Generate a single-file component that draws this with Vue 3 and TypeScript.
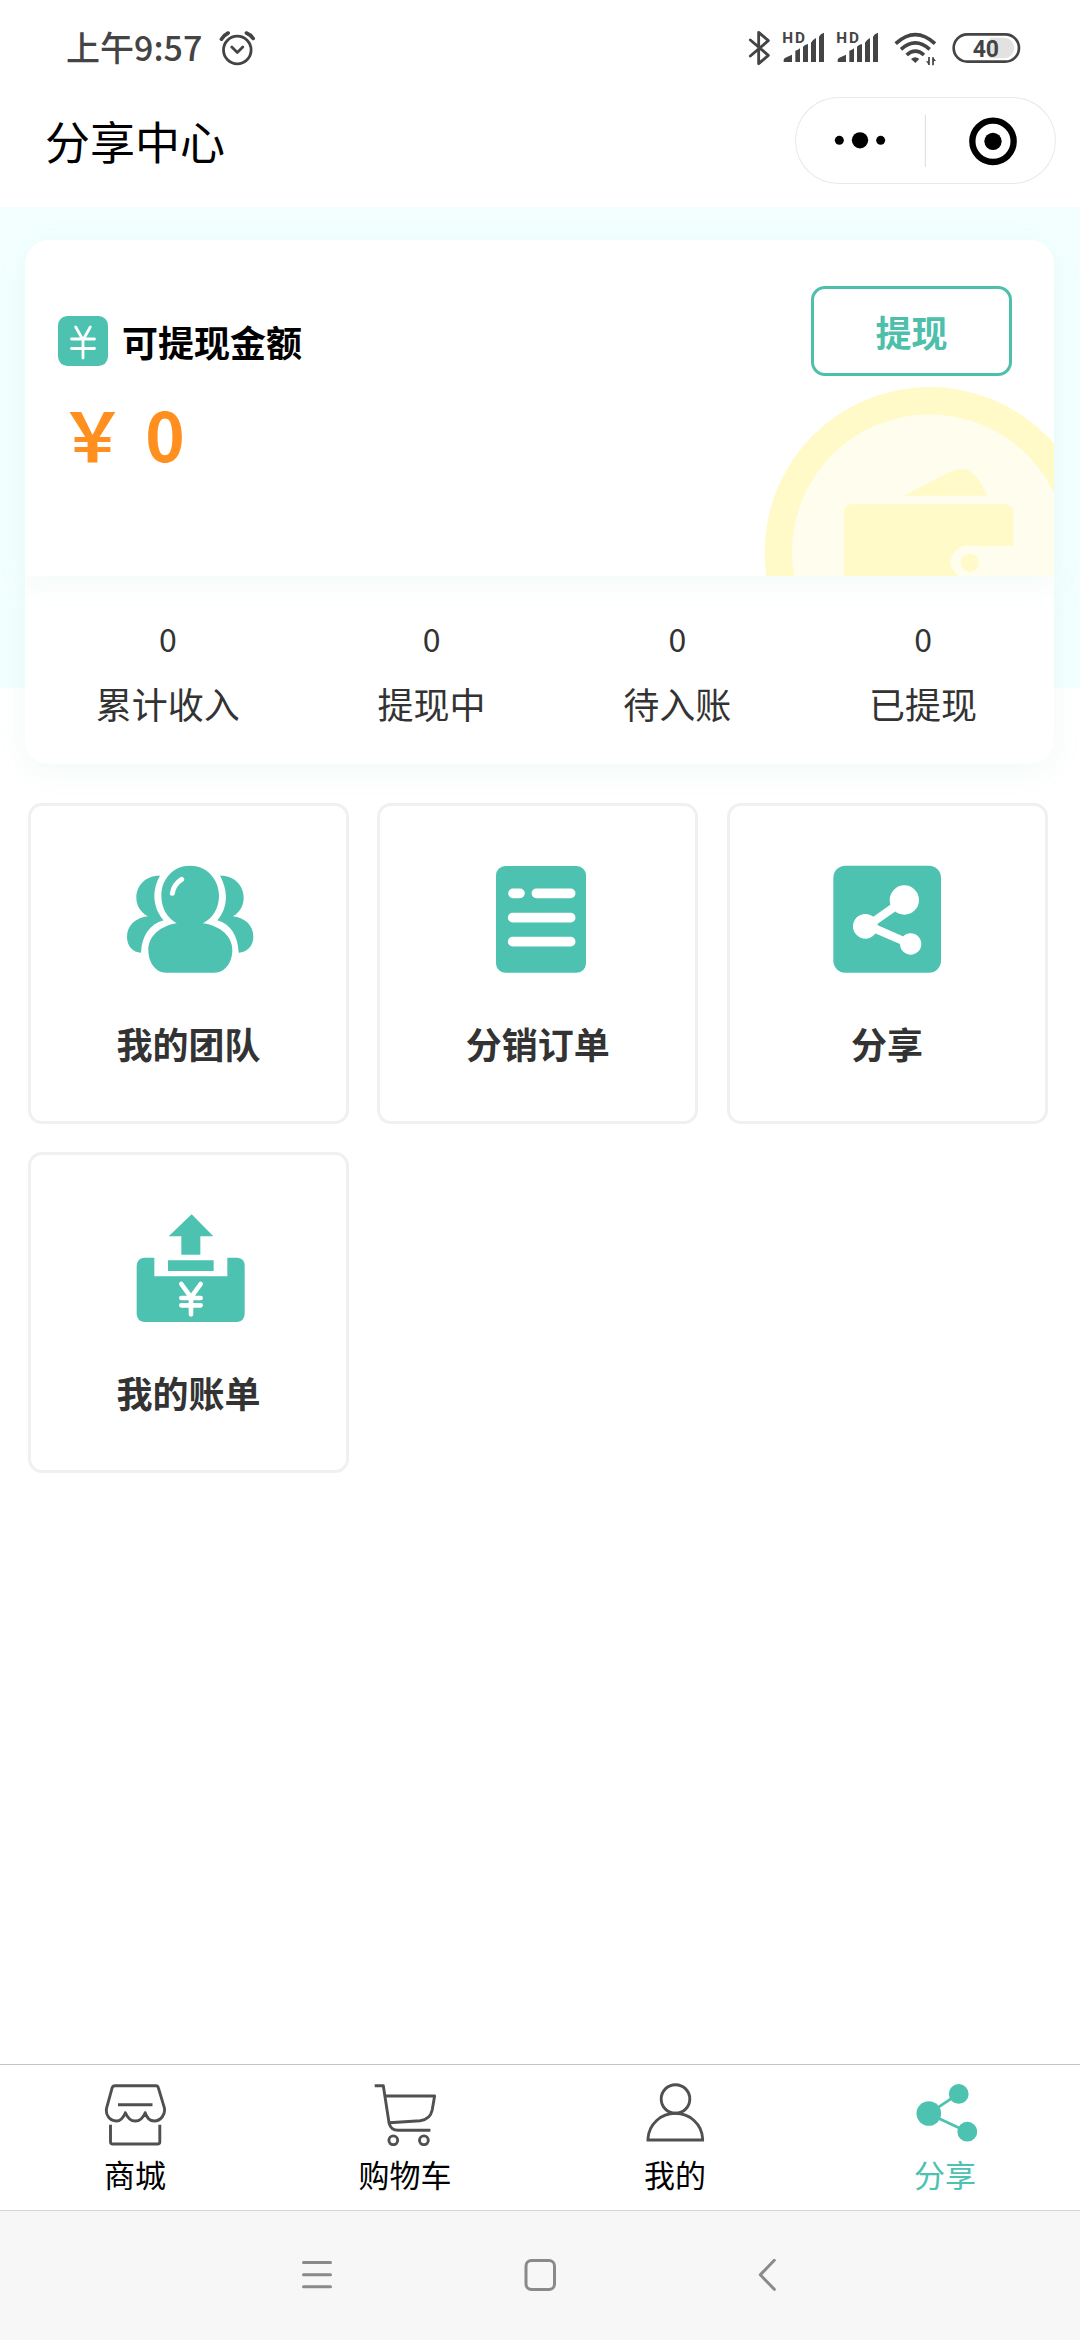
<script setup lang="ts">
interface Stat {
  label: string
  value: number
}
interface Feature {
  key: 'team' | 'orders' | 'share' | 'bill'
  label: string
  viewBox: string
}
interface Tab {
  key: 'mall' | 'cart' | 'mine' | 'share'
  label: string
  active?: boolean
}

const stats: Stat[] = [
  { label: '累计收入', value: 0 },
  { label: '提现中', value: 0 },
  { label: '待入账', value: 0 },
  { label: '已提现', value: 0 },
]

const features: Feature[] = [
  { key: 'team', label: '我的团队', viewBox: '296 226 420 324' },
  { key: 'orders', label: '分销订单', viewBox: '294 226 420 324' },
  { key: 'share', label: '分享', viewBox: '322 226 420 324' },
  { key: 'bill', label: '我的账单', viewBox: '296 224 420 324' },
]

const tabs: Tab[] = [
  { key: 'mall', label: '商城' },
  { key: 'cart', label: '购物车' },
  { key: 'mine', label: '我的' },
  { key: 'share', label: '分享', active: true },
]
</script>

<template>
  <div class="screen">
    <header class="status">
      <div class="status-left">
        <span class="time">上午9:57</span>
        <svg class="alarm" width="37" height="37" viewBox="219 30 37 37" fill="none" stroke="#444" stroke-linecap="round">
          <circle cx="237.3" cy="50" r="13.8" stroke-width="2.8" />
          <path d="M231.8 47l5.5 5.4 5.5-5.4" stroke-width="2.8" stroke-linejoin="round" />
          <path d="M221.4 39.2q2.6-4.2 6.8-6.2M246.4 33q4.2 1.6 6.8 5.4" stroke-width="3.6" />
        </svg>
      </div>
      <div class="status-right">
        <svg class="bluetooth" width="23" height="36" viewBox="85 90 69 108" fill="none" stroke="#444" stroke-width="8.500" stroke-linejoin="round" stroke-linecap="round">
          <path d="M92 120l54 46-29 25V97l29 25-54 46" />
        </svg>
        <svg v-for="n in 2" :key="n" class="signal" width="43" height="36" viewBox="186 90 129 108" fill="#444">
          <text x="187" y="129" font-family="Roboto, sans-serif" font-weight="700" font-size="46" textLength="68">HD</text>
          <path d="M191 186v-6q0-4 5-7l20-9v22zM226 186v-34q8-1 14-7v41zM249 186v-46q5-6 15-8v54zM273 186v-58q5-9 15-14v72zM297 186v-76q4-9 15-12v88z" />
        </svg>
        <svg class="wifi" width="43" height="36" viewBox="522 90 129 108" fill="none" stroke="#444" stroke-width="11">
          <path d="M527 131q59-54 118 0M543 148q43-39 86 0M560 165q26-23 52 0" />
          <path d="M573 177q13-10 25 0l-12 12z" fill="#444" stroke="none" />
          <path d="M627 171v24l-9-11h7M639 196v-24l9 11h-7" fill="#444" stroke="none" />
          <path d="M627 171v24M639 172v24" stroke-width="5" />
        </svg>
        <svg class="battery" width="69" height="36" viewBox="695 90 207 108">
          <path d="M808 113h43a31 31 0 0 1 0 62h-43z" fill="#e2e2e2" />
          <rect x="700" y="103" width="196" height="82" rx="41" fill="none" stroke="#444" stroke-width="8" />
          <text x="757" y="170" font-family="Roboto, sans-serif" font-weight="700" font-size="72" textLength="79" lengthAdjust="spacingAndGlyphs" fill="#444">40</text>
        </svg>
      </div>
    </header>

    <div class="titlebar">
      <h1>分享中心</h1>
      <div class="capsule">
        <svg width="261" height="86" viewBox="225 293 783 258">
          <circle cx="358" cy="423" r="13.5" />
          <circle cx="420" cy="423" r="24.5" />
          <circle cx="482" cy="423" r="13.5" />
          <path d="M616 346v157" stroke="#ddd" stroke-width="3" />
          <circle cx="819" cy="426" r="62" fill="none" stroke="#000" stroke-width="19" />
          <circle cx="819" cy="426" r="26" />
        </svg>
      </div>
    </div>

    <main class="content">
      <section class="balance">
        <svg class="coin" width="290" height="190" viewBox="130 468 870 570">
          <circle cx="627" cy="966" r="495" fill="#fffac8" />
          <circle cx="627" cy="966" r="413" fill="#fffded" />
          <g fill="#fffac8">
            <path d="M550 797l138-72q50-22 82 19 14 20 29 53z" />
            <path d="M370 1040V848q0-25 25-25h456q27 0 27 25v100H750a49 49 0 0 0-32 92z" />
            <circle cx="748" cy="998" r="27" />
          </g>
        </svg>
        <div class="balance-info">
          <div class="balance-title">
            <svg width="50" height="50" viewBox="0 0 50 50">
              <rect width="50" height="50" rx="9.5" fill="#4dc2b0" />
              <path d="M17.7 11l7.3 13 7.3-13M13.5 23h23M13.5 32.5h23M25 24v18" fill="none" stroke="#fff" stroke-width="2.8" stroke-linecap="round" stroke-linejoin="round" />
            </svg>
            <span>可提现金额</span>
          </div>
          <div class="amount">￥ 0</div>
        </div>
        <button class="withdraw" type="button">提现</button>
      </section>

      <section class="stats">
        <div v-for="s in stats" :key="s.label" class="stat">
          <span class="stat-value">{{ s.value }}</span>
          <span class="stat-label">{{ s.label }}</span>
        </div>
      </section>

      <section class="features">
        <div v-for="f in features" :key="f.key" class="feature">
          <svg width="140" height="108" :viewBox="f.viewBox" fill="#4dc2b0">
            <template v-if="f.key === 'team'">
              <path d="M419 258c-41-2-71 28-71 66 0 24 14 45 35 56-38 4-63 28-63 62 0 28 18 46 42 47 2-50 26-86 68-97-34-40-36-90-11-134z" />
              <path d="M599 258c41-2 71 28 71 66 0 24-12 45-33 56 38 4 62 28 62 62 0 28-20 46-44 47-2-50-24-86-64-97 34-40 32-90 8-134z" />
              <path d="M509 228c50 0 87 40 87 90 0 38-18 66-48 83 54 8 88 40 88 80 0 38-22 68-54 68H438c-32 0-54-30-54-68 0-40 34-72 85-80-28-17-46-45-46-83 0-50 36-90 86-90z" />
              <path d="M456 311q4-27 28-42" fill="none" stroke="#fff" stroke-width="15" stroke-linecap="round" />
            </template>
            <template v-else-if="f.key === 'orders'">
              <rect x="378" y="229" width="270" height="320" rx="28" />
              <path d="M429 311h21M499 311h103M428 384h174M428 456h174" stroke="#fff" stroke-width="29" stroke-linecap="round" />
            </template>
            <template v-else-if="f.key === 'share'">
              <rect x="371" y="228" width="323" height="321" rx="36" />
              <path d="M584 331l-97 68q-10 9 2 15l113 49" fill="none" stroke="#fff" stroke-width="25" />
              <g fill="#fff">
                <circle cx="584" cy="331" r="44" />
                <circle cx="467" cy="410" r="37" />
                <circle cx="603" cy="463" r="32" />
              </g>
            </template>
            <template v-else>
              <path d="M514 225l65 66h-39v55h-57v-55h-38zM443 363h137v32H443z" />
              <path d="M371 355h31v56h219v-56h30q22 2 22 24v146q-2 21-22 23H371q-20-2-22-23V379q2-22 22-24z" />
              <path d="M483 434l29 40 29-40M483 476h58M483 498h58M512 474v51" fill="none" stroke="#fff" stroke-width="14" stroke-linecap="round" stroke-linejoin="round" />
            </template>
          </svg>
          <span>{{ f.label }}</span>
        </div>
      </section>
    </main>

    <nav class="tabs">
      <div v-for="t in tabs" :key="t.key" class="tab" :class="{ active: t.active }">
        <svg width="64" height="64" viewBox="0 0 64 64" fill="none" stroke="#505050" stroke-width="2.9" stroke-linejoin="round">
          <template v-if="t.key === 'mall'">
            <path d="M12 3.7h41q1.8 0 2.3 2l6 20c1.6 7-4 13.3-10 13.3q-6.5 0-9.1-8.3-3.4 8.3-9.9 8.3t-9.9-8.3q-3.4 8.3-9 8.3c-6.8 0-11.4-6.3-9.7-13.3l5.5-20q.6-2 2.8-2zM15 22.7h34.5" />
            <path d="M7.5 42.7v17q0 2.3 2.3 2.3h44.7q2.3 0 2.3-2.3v-17" />
          </template>
          <template v-else-if="t.key === 'cart'">
            <path d="M1.7 3.7h8.600l5.800 37.600q2 7 9 7h32.300M12.700 14h48.900l-2.400 14q-2 9.500-12 10.700l-30.800 2" />
            <circle cx="20.3" cy="58.3" r="4.4" />
            <circle cx="50.9" cy="58.3" r="4.4" />
          </template>
          <template v-else-if="t.key === 'mine'">
            <circle cx="32.5" cy="17" r="14.3" />
            <path d="M5 58v-1.5C6 42 18 31.3 32.3 31.3S58.8 42 59.6 56.5V58z" stroke-linejoin="miter" />
          </template>
          <template v-else>
            <path d="M45.7 11.7L15.8 31.7l38.5 18" stroke="#4dc2b0" stroke-width="2.8" />
            <g fill="#4dc2b0" stroke="none">
              <circle cx="15.8" cy="31.5" r="12.3" />
              <circle cx="45.7" cy="11.9" r="9.9" />
              <circle cx="54.3" cy="49.7" r="9.9" />
            </g>
          </template>
        </svg>
        <span>{{ t.label }}</span>
      </div>
    </nav>

    <footer class="sysnav">
      <svg width="474" height="34" viewBox="302 2258 474 34" fill="none" stroke="#8a8a8a" stroke-width="3" stroke-linecap="round" stroke-linejoin="round">
        <path d="M303.5 2262.4h27M303.5 2274.7h27M303.5 2286.7h27" />
        <rect x="526" y="2260.5" width="28.5" height="29" rx="5.5" />
        <path d="M774.3 2260.3l-14 14.5 14 14.5" />
      </svg>
    </footer>
  </div>
</template>

<style>
body {
  background: #fff;
}
</style>

<style scoped>
.screen {
  display: flex;
  flex-direction: column;
  width: 1080px;
  height: 2340px;
  overflow: hidden;
  background: #fff;
  color: #000;
  font-family: "Noto Sans CJK SC", sans-serif;
}
.screen * {
  box-sizing: border-box;
}
svg {
  display: block;
  flex: none;
}
.status {
  display: flex;
  justify-content: space-between;
  height: 97px;
  padding: 30px 59px 0 66px;
}
.status-left,
.status-right {
  display: flex;
  align-items: flex-start;
}
.time {
  width: 153px;
  color: #444;
  font-size: 34px;
  font-weight: 500;
  line-height: 34px;
}
.signal {
  margin-left: 11px;
  overflow: visible;
}
.wifi,
.battery {
  margin-left: 15px;
}
.titlebar {
  display: flex;
  justify-content: space-between;
  align-items: center;
  height: 110px;
  padding: 0 24px 23px 45px;
}
h1 {
  margin: 0;
  font-size: 45px;
  font-weight: 400;
  line-height: 60px;
}
.capsule {
  height: 87px;
  border-radius: 44px;
  box-shadow: inset 0 0 0 1px #e9e9e9;
}
.content {
  flex: 1;
  padding: 33px 26px 0 25px;
  background: linear-gradient(#f3ffff, #f3ffff) 0 0 / 100% 481px no-repeat;
}
.balance {
  position: relative;
  display: flex;
  justify-content: space-between;
  align-items: flex-start;
  height: 336px;
  padding: 46px 42px 0 33px;
  border-radius: 24px 24px 0 0;
  background: #fff;
  box-shadow: 0 6px 30px rgba(77, 194, 150, 0.08);
  z-index: 1;
}
.coin {
  position: absolute;
  right: 0;
  bottom: 0;
}
.balance-info {
  padding-top: 30px;
}
.balance-title {
  display: flex;
  align-items: center;
  gap: 14px;
  height: 50px;
  font-size: 36px;
  font-weight: 700;
}
.amount {
  margin: 17px 0 0 1px;
  color: #ff8f1f;
  font-size: 67px;
  font-weight: 700;
  line-height: 100px;
  word-spacing: 4px;
}
.withdraw {
  position: relative;
  width: 201px;
  height: 90px;
  padding: 0;
  border: 3px solid #4dbfab;
  border-radius: 14px;
  background: #fff;
  color: #4dbfab;
  font: 700 36px/80px "Noto Sans CJK SC", sans-serif;
}
.stats {
  display: flex;
  justify-content: space-around;
  height: 188px;
  padding: 36px 8px 0 2px;
  border-radius: 0 0 24px 24px;
  background: #fff;
  box-shadow: 0 6px 30px rgba(77, 194, 150, 0.08);
  color: #333;
}
.stat {
  display: flex;
  flex-direction: column;
  align-items: center;
}
.stat-value {
  font-size: 32px;
  line-height: 52px;
}
.stat-label {
  margin-top: 13px;
  font-size: 36px;
  line-height: 52px;
}
.features {
  display: grid;
  grid-template-columns: repeat(3, 321px);
  grid-auto-rows: 321px;
  gap: 28px 28.3px;
  margin: 39px 0 0 3px;
}
.feature {
  display: flex;
  flex-direction: column;
  align-items: center;
  padding-top: 59px;
  border: 3px solid #f0f0f0;
  border-radius: 14px;
  color: #333;
  font-size: 36px;
  font-weight: 700;
  line-height: 50px;
}
.feature span {
  margin-top: 45px;
}
.tabs {
  display: flex;
  height: 146px;
  border-top: 1px solid #c4c4c4;
}
.tab {
  display: flex;
  flex: 1;
  flex-direction: column;
  align-items: center;
  padding-top: 17px;
  font-size: 31px;
  line-height: 44px;
}
.tab span {
  margin-top: 6px;
}
.tab.active {
  color: #4dc2b0;
}
.sysnav {
  height: 130px;
  padding: 47px 0 0 302px;
  border-top: 1px solid #d4d4d4;
  background: #f7f7f7;
}
</style>
